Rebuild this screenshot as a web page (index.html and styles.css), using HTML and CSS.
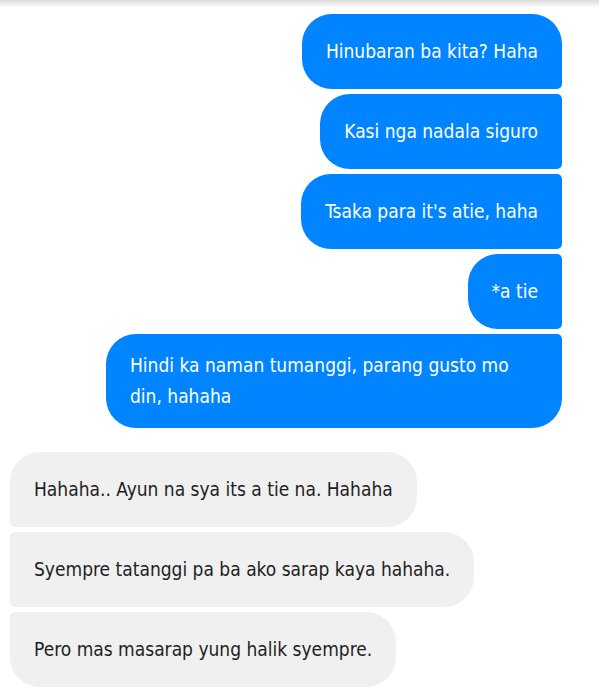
FILE: index.html
```html
<!DOCTYPE html>
<html lang="en">

<head>
    <meta charset="UTF-8">
    <meta name="viewport" content="width=device-width, initial-scale=1.0">
    <title>Chat</title>
    <link rel="stylesheet" href="styles.css">
</head>

<body>

    <div class="top-shade"></div>

    <div class="chat">
        <div class="msg sent first">Hinubaran ba kita? Haha</div>
        <div class="msg sent">Kasi nga nadala siguro</div>
        <div class="msg sent">Tsaka para it's atie, haha</div>
        <div class="msg sent">*a tie</div>
        <div class="msg sent last">Hindi ka naman tumanggi, parang gusto mo din, hahaha</div>

        <div class="msg received first">Hahaha.. Ayun na sya its a tie na. Hahaha</div>
        <div class="msg received">Syempre tatanggi pa ba ako sarap kaya hahaha.</div>
        <div class="msg received last">Pero mas masarap yung halik syempre.</div>
    </div>

</body>

</html>
```

FILE: styles.css
```css
body {
    margin: 0;
    padding: 0;
    background-color: #fff;
    font-family: 'DejaVu Sans Condensed', 'Roboto', sans-serif;
    overflow: hidden;
}

.top-shade {
    height: 8px;
    background: linear-gradient(to bottom, #dcdcdc, #fff);
}

.chat {
    display: flex;
    flex-direction: column;
    gap: 5px;
    padding: 6px 37px 0 10px;
}

.msg {
    box-sizing: border-box;
    max-width: 456px;
    min-height: 75px;
    padding: 16px 24px;
    display: flex;
    align-items: center;
    font-size: 19px;
    line-height: 31px;
    border-radius: 30px;
}

.sent {
    align-self: flex-end;
    background-color: #0084ff;
    color: #fff;
    border-top-right-radius: 5px;
    border-bottom-right-radius: 5px;
}

.sent.first {
    border-top-right-radius: 30px;
}

.sent.last {
    border-bottom-right-radius: 30px;
    margin-bottom: 19px;
}

.received {
    align-self: flex-start;
    max-width: 500px;
    background-color: #f0f0f0;
    color: #1e1e1e;
    border-top-left-radius: 5px;
    border-bottom-left-radius: 5px;
}

.received.first {
    border-top-left-radius: 30px;
}

.received.last {
    border-bottom-left-radius: 30px;
}
```
